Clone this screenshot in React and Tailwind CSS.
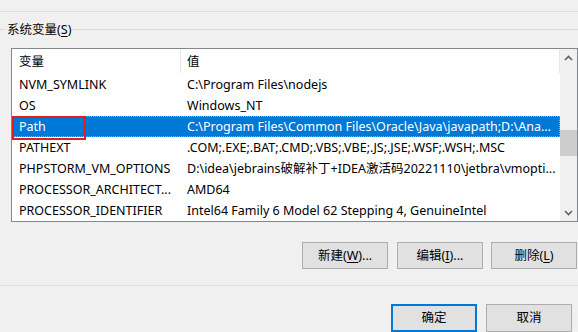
import React from "react";

const rows = [
  ["NVM_SYMLINK", "C:\\Program Files\\nodejs"],
  ["OS", "Windows_NT"],
  ["Path", "C:\\Program Files\\Common Files\\Oracle\\Java\\javapath;D:\\Ana...", true],
  ["PATHEXT", ".COM;.EXE;.BAT;.CMD;.VBS;.VBE;.JS;.JSE;.WSF;.WSH;.MSC"],
  ["PHPSTORM_VM_OPTIONS", "D:\\idea\\jebrains破解补丁+IDEA激活码20221110\\jetbra\\vmopti..."],
  ["PROCESSOR_ARCHITECT...", "AMD64"],
  ["PROCESSOR_IDENTIFIER", "Intel64 Family 6 Model 62 Stepping 4, GenuineIntel"],
];

function Btn({ children, primary, className = "" }) {
  return (
    <div
      className={
        "flex items-center justify-center leading-[20px] bg-[#e1e1e1] text-black " +
        (primary ? "border-2 border-[#0078d7] " : "border border-[#adadad] ") +
        className
      }
    >
      {children}
    </div>
  );
}

export default function App() {
  return (
    <div className="w-[578px] h-[332px] overflow-hidden bg-[#f0f0f0] text-[12.5px] leading-[17px] text-black font-['Noto_Sans','Noto_Sans_CJK_SC',sans-serif]">
      <div className="h-[11px]" />
      <div className="h-px bg-[#dcdcdc]" />
      <div className="mt-[9px] h-[17px] flex items-center">
        <div className="w-[6px] h-px bg-[#dcdcdc]" />
        <div className="px-[1px] whitespace-nowrap">
          系统变量(<span className="underline underline-offset-2">S</span>)
        </div>
        <div className="flex-1 h-px bg-[#dcdcdc]" />
      </div>

      <div className="mt-[10px] ml-[11px] w-[567px] h-[174px] border border-[#828790] bg-white flex relative">
        <div className="flex-1 min-w-0 flex flex-col">
          <div className="h-[25px] flex items-stretch">
            <div className="w-[169px] pl-[7px] flex items-center border-r border-[#e5e5e5] my-[1px]">变量</div>
            <div className="flex-1 pl-[6px] flex items-center border-r border-[#e5e5e5] my-[1px]">值</div>
          </div>
          {rows.map(([k, v, sel]) => (
            <div
              key={k}
              className={
                "h-[21px] flex items-center leading-[21px] whitespace-nowrap " +
                (sel
                  ? "bg-[#0078d7] text-white outline-1 outline-dotted -outline-offset-1 outline-[#f0962e]"
                  : "")
              }
            >
              <div className="w-[169px] pl-[7px]">{k}</div>
              <div className="flex-1 min-w-0 pl-[6px]">{v}</div>
            </div>
          ))}
        </div>
        <div className="w-[17px] bg-[#f0f0f0] flex flex-col">
          <div className="h-[17px] flex items-center justify-center">
            <svg width="9" height="6" viewBox="0 0 9 6">
              <path d="M1 5 L4.5 1.5 L8 5" fill="none" stroke="#606060" strokeWidth="1.6" />
            </svg>
          </div>
          <div className="flex-1 flex flex-col">
            <div className="h-[64px]" />
            <div className="h-[26px] bg-[#cdcdcd]" />
          </div>
          <div className="h-[17px] flex items-center justify-center">
            <svg width="9" height="6" viewBox="0 0 9 6">
              <path d="M1 1 L4.5 4.5 L8 1" fill="none" stroke="#606060" strokeWidth="1.6" />
            </svg>
          </div>
        </div>
        <div className="absolute left-0 top-[67px] w-[74px] h-[24px] border-2 border-[#e51c1c]" />
      </div>

      <div className="mt-[20px] flex justify-end pr-[1px]">
        <Btn className="w-[86px] h-[27px]">
          新建(<span className="underline underline-offset-2">W</span>)...
        </Btn>
        <Btn className="w-[86px] h-[27px] ml-[9px]">
          编辑(<span className="underline underline-offset-2">I</span>)...
        </Btn>
        <Btn className="w-[86px] h-[27px] ml-[8px]">
          删除(<span className="underline underline-offset-2">L</span>)
        </Btn>
      </div>

      <div className="mt-[16px] h-px bg-[#dfdfdf]" />

      <div className="mt-[18px] flex justify-end pr-[6px]">
        <Btn primary className="w-[86px] h-[28px]">确定</Btn>
        <Btn className="w-[86px] h-[28px] ml-[9px]">取消</Btn>
      </div>
    </div>
  );
}
